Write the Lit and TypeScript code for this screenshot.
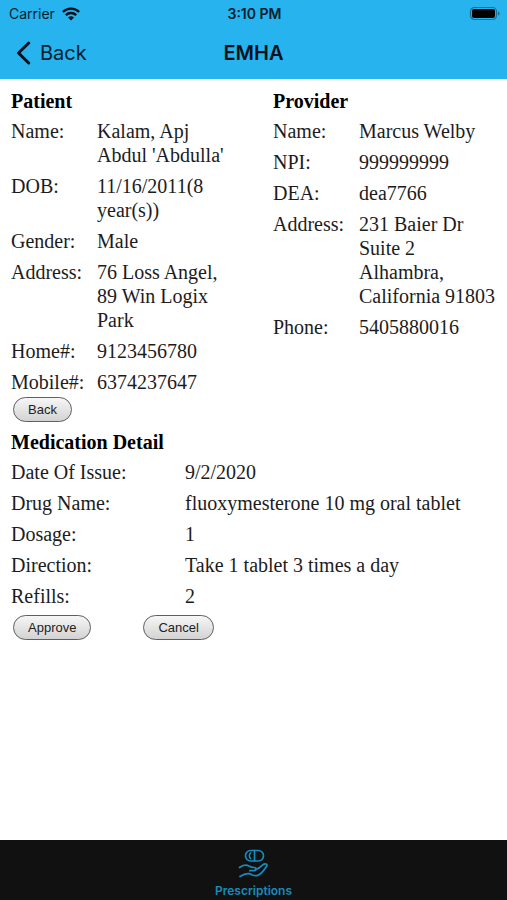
import { LitElement, html, css, svg } from "lit";
import { customElement, property } from "lit/decorators.js";

type Field = [label: string, value: string];

const patient: Field[] = [
  ["Name:", "Kalam, Apj Abdul 'Abdulla'"],
  ["DOB:", "11/16/2011(8 year(s))"],
  ["Gender:", "Male"],
  ["Address:", "76 Loss Angel, 89 Win Logix Park"],
  ["Home#:", "9123456780"],
  ["Mobile#:", "6374237647"],
];

const provider: Field[] = [
  ["Name:", "Marcus Welby"],
  ["NPI:", "999999999"],
  ["DEA:", "dea7766"],
  ["Address:", "231 Baier Dr Suite 2 Alhambra, California 91803"],
  ["Phone:", "5405880016"],
];

const medication: Field[] = [
  ["Date Of Issue:", "9/2/2020"],
  ["Drug Name:", "fluoxymesterone 10 mg oral tablet"],
  ["Dosage:", "1"],
  ["Direction:", "Take 1 tablet 3 times a day"],
  ["Refills:", "2"],
];

@customElement("field-list")
class FieldList extends LitElement {
  @property() heading = "";
  @property({ attribute: false }) fields: Field[] = [];
  @property({ type: Boolean, reflect: true }) wide = false;

  static styles = css`
    :host {
      display: block;
      --label: 86px;
    }
    :host([wide]) {
      --label: 174px;
    }
    .heading {
      margin: 0 0 6px;
      font-size: 20px;
      line-height: 24px;
      font-weight: 700;
      color: #000;
    }
    .list {
      margin: 0;
      display: flex;
      flex-direction: column;
      gap: 7px;
    }
    .row {
      display: grid;
      grid-template-columns: var(--label) minmax(0, 1fr);
    }
    .value {
      margin: 0;
    }
  `;

  render() {
    return html`
      <h2 class="heading">${this.heading}</h2>
      <dl class="list">
        ${this.fields.map(
          ([label, value]) => html`<div class="row">
            <dt>${label}</dt>
            <dd class="value">${value}</dd>
          </div>`
        )}
      </dl>
    `;
  }
}

@customElement("app-root")
class AppRoot extends LitElement {
  static styles = css`
    :host {
      display: flex;
      flex-direction: column;
      min-height: 100vh;
      background: #fff;
      color: #1c1c1c;
      font: 20px/24px "Liberation Serif", "Times New Roman", serif;
    }
    .top {
      background: #27b3ee;
      color: #04202c;
      font-family: Inter, "Liberation Sans", sans-serif;
    }
    .status,
    .nav {
      display: grid;
      grid-template-columns: 1fr auto 1fr;
      align-items: center;
    }
    .status {
      height: 27px;
      padding: 0 7px 0 9px;
      font-size: 14px;
      line-height: 16px;
    }
    .carrier {
      display: flex;
      align-items: center;
      gap: 7px;
    }
    .time {
      font-weight: 600;
    }
    .battery {
      justify-self: end;
    }
    .nav {
      height: 52px;
      padding: 0 16px;
    }
    .back {
      justify-self: start;
      display: flex;
      align-items: center;
      gap: 9px;
      padding: 0;
      border: 0;
      background: none;
      color: inherit;
      font: 20px/24px Inter, "Liberation Sans", sans-serif;
    }
    .title {
      margin: 0;
      font-size: 20px;
      line-height: 24px;
      font-weight: 600;
      color: #021019;
    }
    svg {
      display: block;
    }
    .page {
      flex: 1;
      padding: 10px 11px 24px;
    }
    .people {
      display: grid;
      grid-template-columns: 1fr 1fr;
      column-gap: 39px;
    }
    .actions {
      display: flex;
      padding: 3px 2px 8px;
    }
    .decision {
      padding-top: 7px;
      gap: 52px;
    }
    .btn {
      height: 25px;
      padding: 0 14px;
      border: 1px solid #5f5f5f;
      border-radius: 13px;
      background: linear-gradient(#f6f6f6, #d3d3d3);
      color: #222;
      font: 13px/16px "Liberation Sans", Arial, sans-serif;
    }
    .tabs {
      position: sticky;
      bottom: 0;
      display: flex;
      justify-content: center;
      height: 60px;
      background: #111;
    }
    .tab {
      display: flex;
      flex-direction: column;
      align-items: center;
      gap: 4px;
      padding-top: 9px;
      color: #168cbf;
      text-decoration: none;
      font: 600 12px/16px Inter, "Liberation Sans", sans-serif;
    }
  `;

  render() {
    return html`
      <header class="top">
        <div class="status">
          <span class="carrier">
            Carrier
            ${svg`<svg width="18" height="14" viewBox="0 0 18 14" fill="none" stroke="#021019" stroke-width="2.4" aria-hidden="true">
              <path d="M.9 5a11.5 11.5 0 0 1 16.2 0M3.8 8.1a7.4 7.4 0 0 1 10.4 0"/>
              <path d="M9 13.6 6 10.6a4.3 4.3 0 0 1 6 0Z" fill="#021019" stroke="none"/>
            </svg>`}
          </span>
          <span class="time">3:10 PM</span>
          <svg class="battery" width="31" height="15" viewBox="0 0 31 15" aria-hidden="true">
            <rect x="1.5" y="1.5" width="26" height="12" rx="4" fill="none" stroke="#176f94" stroke-width="1.2" />
            <rect x="3" y="3" width="23" height="9" rx="2" fill="#000" />
            <path d="M29 5.5q1.6.6 1.6 2t-1.6 2Z" fill="#176f94" />
          </svg>
        </div>
        <nav class="nav">
          <button class="back" type="button">
            <svg width="15" height="24" viewBox="0 0 15 24" fill="none" stroke="#021019" stroke-width="3" stroke-linecap="round" stroke-linejoin="round" aria-hidden="true">
              <path d="M12.7 2 2.5 12l10.2 10" />
            </svg>
            Back
          </button>
          <h1 class="title">EMHA</h1>
        </nav>
      </header>

      <main class="page">
        <div class="people">
          <field-list heading="Patient" .fields=${patient}></field-list>
          <field-list heading="Provider" .fields=${provider}></field-list>
        </div>
        <div class="actions">
          <button class="btn" type="button">Back</button>
        </div>
        <field-list wide heading="Medication Detail" .fields=${medication}></field-list>
        <div class="actions decision">
          <button class="btn" type="button">Approve</button>
          <button class="btn" type="button">Cancel</button>
        </div>
      </main>

      <nav class="tabs">
        <a class="tab" href="#prescriptions">
          <svg width="31" height="30" viewBox="0 0 31 30" fill="none" stroke="#168cbf" stroke-width="1.7" stroke-linecap="round" stroke-linejoin="round" aria-hidden="true">
            <rect x="7.500" y="1.500" width="18" height="10.500" rx="5.200" />
            <path d="M16.500 1.500V12M12.500 4a4 4 0 0 0 0 5.500" />
            <path d="M1.500 18.500c3-2.500 7-3 10-1.200 1.500.9 2.800 1.200 4.500 1.200 2.600 0 2.600 3.200.3 3.200h-4.500" />
            <path d="M17.500 20.500c3-.6 5.200-2.500 7.300-4.600 2-2 5.400-1 3.700 1.500-2.200 3.300-5 6.800-8 8.600-3.800 2.300-6.500-.8-9.500-1.300-3-.5-6 .8-9 2.800" />
          </svg>
          Prescriptions
        </a>
      </nav>
    `;
  }
}
